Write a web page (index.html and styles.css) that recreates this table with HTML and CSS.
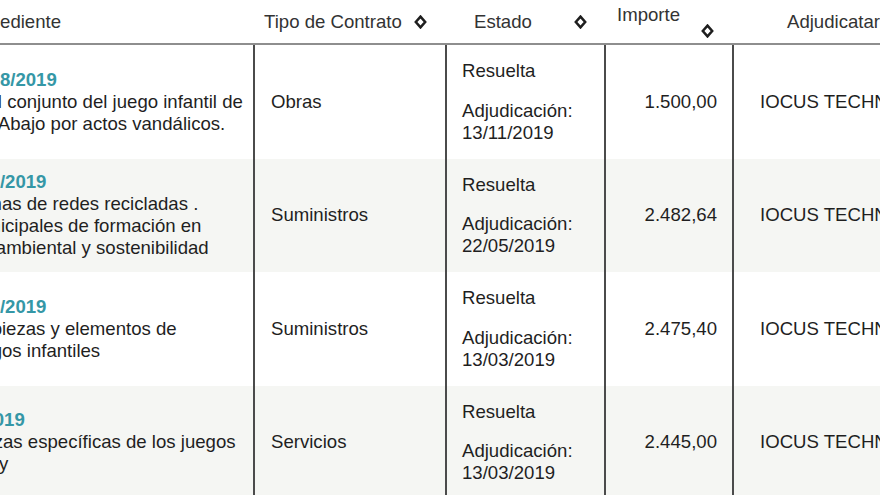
FILE: index.html
```html
<!DOCTYPE html>
<html lang="es">
<head>
<meta charset="utf-8">
<title>Contratos</title>
<link rel="stylesheet" href="styles.css">
</head>
<body>
<div class="table">
  <div class="row head">
    <div class="th th-exp">Expediente</div>
    <div class="th th-tipo"><span>Tipo de Contrato</span><svg class="sort" viewBox="0 0 13 14" width="13" height="14"><path d="M6.5 1.6 L11.2 7 L6.5 12.4 L1.8 7 Z"/></svg></div>
    <div class="th th-estado"><span>Estado</span><svg class="sort" viewBox="0 0 13 14" width="13" height="14"><path d="M6.5 1.6 L11.2 7 L6.5 12.4 L1.8 7 Z"/></svg></div>
    <div class="th th-importe"><span>Importe</span><svg class="sort" viewBox="0 0 13 14" width="13" height="14"><path d="M6.5 1.6 L11.2 7 L6.5 12.4 L1.8 7 Z"/></svg></div>
    <div class="th th-adj">Adjudicatario</div>
  </div>

  <div class="row">
    <div class="td exp"><a class="num">SU-2019/03328/2019</a><p>Reposición del conjunto del juego infantil de<br>Santullano de Abajo por actos vandálicos.</p></div>
    <div class="td tipo">Obras</div>
    <div class="td estado"><p class="st">Resuelta</p><p>Adjudicación:<br>13/11/2019</p></div>
    <div class="td importe">1.500,00</div>
    <div class="td adj">IOCUS TECHNOLOGY S.L.</div>
  </div>

  <div class="row alt">
    <div class="td exp"><a class="num">SU-2019/0297/2019</a><p>Compra de lonas de redes recicladas .<br>Las aulas municipales de formación en<br>de educación ambiental y sostenibilidad</p></div>
    <div class="td tipo">Suministros</div>
    <div class="td estado"><p class="st">Resuelta</p><p>Adjudicación:<br>22/05/2019</p></div>
    <div class="td importe">2.482,64</div>
    <div class="td adj">IOCUS TECHNOLOGY S.L.</div>
  </div>

  <div class="row">
    <div class="td exp"><a class="num">SU-2019/0187/2019</a><p>Entrega de 5 piezas y elementos de<br>diferentes juegos infantiles</p></div>
    <div class="td tipo">Suministros</div>
    <div class="td estado"><p class="st">Resuelta</p><p>Adjudicación:<br>13/03/2019</p></div>
    <div class="td importe">2.475,40</div>
    <div class="td adj">IOCUS TECHNOLOGY S.L.</div>
  </div>

  <div class="row alt">
    <div class="td exp"><a class="num">SE-2019/10/2019</a><p>Pedido de piezas específicas de los juegos<br>biosaludables y</p></div>
    <div class="td tipo">Servicios</div>
    <div class="td estado"><p class="st">Resuelta</p><p>Adjudicación:<br>13/03/2019</p></div>
    <div class="td importe">2.445,00</div>
    <div class="td adj">IOCUS TECHNOLOGY S.L.</div>
  </div>
</div>
</body>
</html>
```

FILE: styles.css
```css
html, body {
  margin: 0;
  padding: 0;
  overflow: hidden;
  background: #fff;
}
body {
  width: 880px;
  height: 495px;
  font-family: "Liberation Sans", Arial, Helvetica, sans-serif;
  font-size: 18.6px;
  line-height: 22px;
  color: #1f1f1f;
}
p { margin: 0; }

.table {
  width: 1140px;
  margin-left: -140px;
}
.row {
  display: grid;
  grid-template-columns: 393px 192px 159px 128px 268px;
  background: #fff;
}
.row.alt { background: #f5f6f3; }

.head {
  height: 43px;
  border-bottom: 2px solid #8e8e8e;
  color: #333;
}
.th {
  display: flex;
  align-items: center;
  white-space: nowrap;
}
.th-exp { padding-left: 108px; }
.th-tipo { padding-left: 11px; padding-right: 18px; justify-content: space-between; }
.th-estado { padding-left: 29px; padding-right: 17px; justify-content: space-between; }
.th-importe {
  flex-direction: column;
  align-items: stretch;
  padding: 4px 18px 0 13px;
}
.th-importe span { line-height: 22px; }
.th-importe .sort { align-self: flex-end; margin-top: -2px; }
.th-adj { padding-left: 55px; }

.sort {
  display: block;
  flex: none;
}
.sort path {
  fill: none;
  stroke: #1e1e1e;
  stroke-width: 2.5;
  stroke-linejoin: miter;
}

.td {
  display: flex;
  flex-direction: column;
  justify-content: center;
  padding: 15px 0;
  white-space: nowrap;
}
.td + .td { border-left: 2px solid #4b4b4b; }

.exp { padding: 10px 0 10px 20px; }
.num {
  color: #3597a6;
  font-weight: bold;
  text-decoration: none;
}
.tipo { padding-left: 16px; }
.estado { padding-left: 15px; }
.estado .st { margin-bottom: 17.5px; }
.importe { align-items: flex-end; padding-right: 15px; }
.adj { padding-left: 26px; }
```
